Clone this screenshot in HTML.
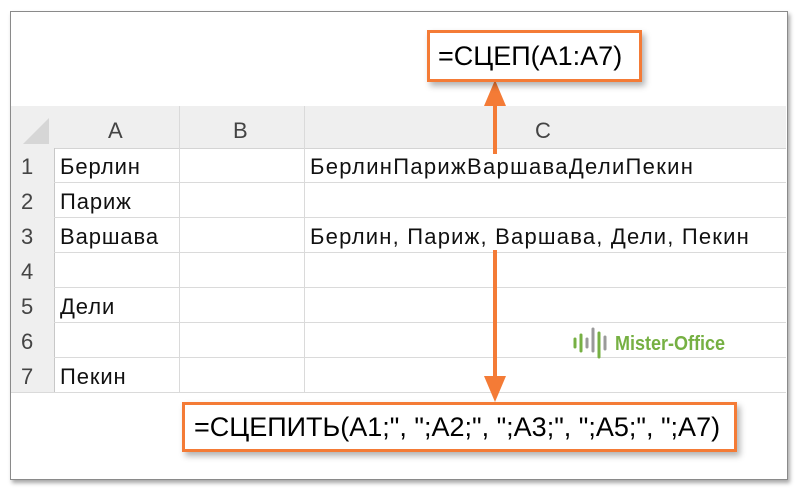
<!DOCTYPE html>
<html><head><meta charset="utf-8"><style>
body{margin:0;width:800px;height:492px;background:#fff;position:relative;overflow:hidden;font-family:"Liberation Sans",Arial,sans-serif}
.frame{position:absolute;left:10px;top:11px;width:776px;height:467px;border:1.5px solid #8a8a8a;box-shadow:2px 3px 4px rgba(0,0,0,.35);background:#fff}
.hdr{position:absolute;left:11px;top:106px;width:775px;height:42px;background:#efefef;border-bottom:1px solid #d4d4d4}
.rh{position:absolute;left:11px;top:148px;width:43px;height:244px;background:#efefef;border-right:1px solid #c8c8c8}
.t{position:absolute;font-size:22px;color:#111;line-height:1;letter-spacing:0.9px;white-space:nowrap}
.h{position:absolute;font-size:22px;color:#444;line-height:1}
.hl{position:absolute;left:54px;width:732px;height:1px;background:#dadada}
.vl{position:absolute;top:106px;height:286px;width:1px;background:#dadada}
.box{position:absolute;border:3px solid #f47b36;background:#fff;box-shadow:3px 4px 6px rgba(0,0,0,.3);font-size:27px;color:#000;white-space:nowrap;box-sizing:border-box}
</style></head><body>
<div class="frame"></div>
<div class="hdr"></div>
<div class="rh"></div>
<svg style="position:absolute;left:11px;top:106px" width="43" height="42"><polygon points="38,12 38,38 12,38" fill="#d6d6d6"/></svg>
<div class="hl" style="top:182px"></div><div class="hl" style="top:217px"></div><div class="hl" style="top:252px"></div><div class="hl" style="top:287px"></div><div class="hl" style="top:322px"></div><div class="hl" style="top:357px"></div><div class="hl" style="top:392px;left:11px;width:775px"></div>
<div class="vl" style="left:179px"></div><div class="vl" style="left:304px"></div>
<div class="h" style="left:108px;top:120px">A</div>
<div class="h" style="left:233px;top:120px">B</div>
<div class="h" style="left:535px;top:120px">C</div>
<div class="h" style="left:21px;top:156px">1</div>
<div class="h" style="left:21px;top:191px">2</div>
<div class="h" style="left:21px;top:226px">3</div>
<div class="h" style="left:21px;top:261px">4</div>
<div class="h" style="left:21px;top:296px">5</div>
<div class="h" style="left:21px;top:331px">6</div>
<div class="h" style="left:21px;top:366px">7</div>
<div class="t" style="left:60px;top:156px">Берлин</div>
<div class="t" style="left:60px;top:191px">Париж</div>
<div class="t" style="left:60px;top:226px">Варшава</div>
<div class="t" style="left:60px;top:296px">Дели</div>
<div class="t" style="left:60px;top:366px">Пекин</div>
<div class="t" style="left:310px;top:156px;letter-spacing:1.3px">БерлинПарижВаршаваДелиПекин</div>
<div class="t" style="left:310px;top:226px;letter-spacing:1.2px">Берлин, Париж, Варшава, Дели, Пекин</div>
<svg style="position:absolute;left:570px;top:325px" width="160" height="36">
<g stroke-linecap="round" stroke-width="3">
<line x1="5" y1="14" x2="5" y2="22" stroke="#76b043"/>
<line x1="11" y1="10" x2="11" y2="26" stroke="#76b043"/>
<line x1="17" y1="14" x2="17" y2="22" stroke="#9a9a9a"/>
<line x1="23" y1="4" x2="23" y2="26" stroke="#9a9a9a"/>
<line x1="29" y1="8" x2="29" y2="32" stroke="#76b043"/>
<line x1="35" y1="12" x2="35" y2="24" stroke="#9a9a9a"/>
</g>
<text x="45" y="25" font-family="Liberation Sans Narrow,Liberation Sans,sans-serif" font-weight="bold" font-size="20" fill="#76b043" textLength="110" lengthAdjust="spacingAndGlyphs">Mister-Office</text>
</svg>
<svg style="position:absolute;left:0;top:0" width="800" height="492">
<line x1="495" y1="100" x2="495" y2="154" stroke="#f47b36" stroke-width="4"/>
<polygon points="495,80 484,106 506,106" fill="#f47b36"/>
<line x1="495" y1="250" x2="495" y2="382" stroke="#f47b36" stroke-width="4"/>
<polygon points="495,402 484,376 506,376" fill="#f47b36"/>
</svg>
<div class="box" style="left:427px;top:30px;width:215px;height:52px;line-height:46px;padding-left:8px">=СЦЕП(A1:A7)</div>
<div class="box" style="left:182px;top:402px;width:555px;height:50px;line-height:44px;padding-left:9px">=СЦЕПИТЬ(A1;", ";A2;", ";A3;", ";A5;", ";A7)</div>
</body></html>
